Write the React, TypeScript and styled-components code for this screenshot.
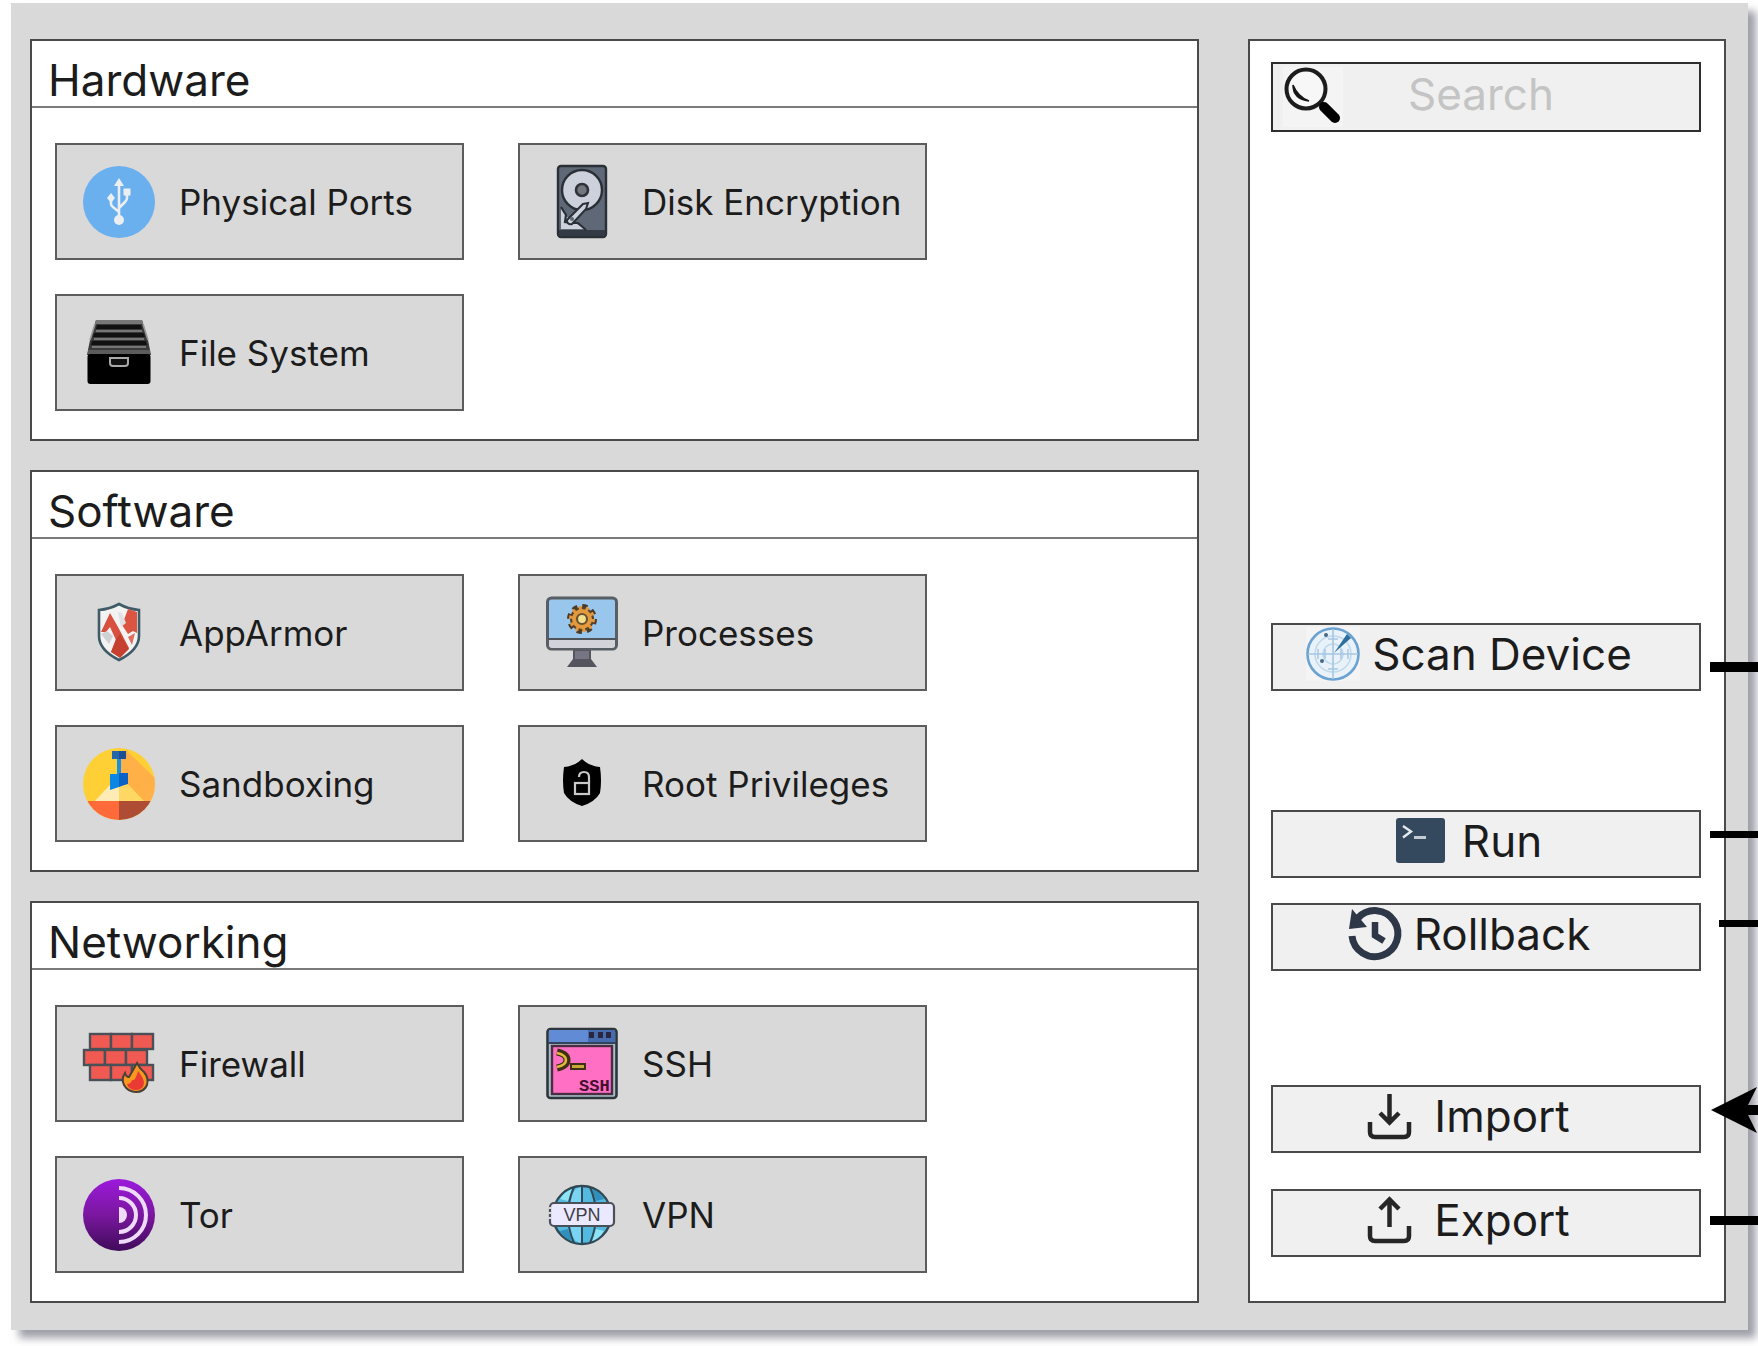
import React from "react";
import styled, { createGlobalStyle } from "styled-components";

const line = "#4a4a4a";
const ink = "#1c1c1c";

const GlobalStyle = createGlobalStyle`
  * { box-sizing: border-box; }
  body {
    margin: 0;
    background: #fff;
    color: ${ink};
    font-family: Inter, "Liberation Sans", sans-serif;
    font-optical-sizing: none;
    overflow-x: hidden;
  }
  button, input { font: inherit; color: inherit; }
  svg { display: block; flex: none; overflow: visible; }
`;

const Page = styled.div`
  padding: 3px 10px 16px 11px;
  overflow: hidden;
`;

const Frame = styled.div`
  display: grid;
  grid-template-columns: minmax(0, 1169fr) minmax(0, 478fr);
  gap: 49px;
  padding: 36px 22px 27px 19px;
  background: #d9d9d9;
  box-shadow: 8px 8px 8px rgba(95, 95, 112, 0.6);
`;

const Sections = styled.main`
  display: flex;
  flex-direction: column;
  gap: 29px;
`;

const Section = styled.section`
  border: 2px solid ${line};
  background: #fff;
`;

const SectionTitle = styled.h2`
  margin: 0;
  padding: 13px 16px 0;
  border-bottom: 2px solid #7a7a7a;
  font-size: 44px;
  font-weight: 400;
  line-height: 52px;
`;

const TileGrid = styled.div`
  display: grid;
  grid-template-columns: repeat(2, minmax(0, 409px));
  gap: 34px 54px;
  padding: 35px 23px 28px;
`;

const Tile = styled.button`
  display: flex;
  align-items: center;
  gap: 24px;
  height: 117px;
  padding: 0 0 0 26px;
  border: 2px solid #5c5c5c;
  background: #d9d9d9;
  font-size: 35px;
  line-height: 40px;
  text-align: left;
  white-space: nowrap;
`;

const Sidebar = styled.aside`
  display: flex;
  flex-direction: column;
  justify-content: space-between;
  padding: 21px 23px 44px 21px;
  border: 2px solid ${line};
  background: #fff;
`;

const SearchBox = styled.label`
  display: flex;
  align-items: center;
  height: 70px;
  padding-left: 10px;
  border: 2px solid #2e2e2e;
  background: #f0f0f0;
`;

const SearchInput = styled.input`
  flex: 1;
  min-width: 0;
  height: 66px;
  padding: 0 16px 6px 65px;
  border: 0;
  outline: 0;
  background: transparent;
  font-size: 44px;
  &::placeholder { color: #c4c4c4; opacity: 1; }
`;

const Actions = styled.div`
  display: flex;
  flex-direction: column;
`;

const ActionSlot = styled.div<{ $gap: number }>`
  position: relative;
  margin-top: ${(p) => p.$gap}px;
`;

const Action = styled.button`
  display: flex;
  align-items: center;
  justify-content: center;
  gap: 12px;
  width: 100%;
  height: 68px;
  padding: 0 34px 6px 0;
  border: 2px solid ${line};
  background: #f0f0f0;
  font-size: 44px;
  line-height: 56px;
  white-space: nowrap;
`;

const Wire = styled.span<{ $top: number; $size: number; $inset: number }>`
  position: absolute;
  top: ${(p) => p.$top}px;
  left: calc(100% + ${(p) => p.$inset}px);
  width: 60px;
  height: ${(p) => p.$size}px;
  background: #000;
`;

const ArrowWire = styled.svg`
  position: absolute;
  top: 2px;
  left: calc(100% + 10px);
`;

const TileIcon = ({ children }: { children: React.ReactNode }) => (
  <svg width="72" height="72" viewBox="0 0 72 72" aria-hidden="true">{children}</svg>
);

const ActionIcon = ({ children }: { children: React.ReactNode }) => (
  <svg width="54" height="54" viewBox="0 0 54 54" aria-hidden="true">{children}</svg>
);

const UsbIcon = () => (
  <TileIcon>
    <circle cx="36" cy="36" r="36" fill="#6aafee" />
    <g fill="#eceff2" stroke="none">
      <path d="M36 12l5 8H31z" />
      <circle cx="36" cy="54" r="5" />
      <path d="M28 27l4 5-4 5-4-5z" />
      <path d="M40.500 22.500h7v7h-7z" />
    </g>
    <path d="M36 18v34M28 35v3q0 2 2 3l6 5M44 28v4q0 2-2 4l-6 6" fill="none" stroke="#eceff2" strokeWidth="2.600" />
  </TileIcon>
);

const FileIcon = () => (
  <TileIcon>
    <path d="M13 3h46l3 10 3 10 3 15H4l3-15 3-10z" fill="#3a3a3a" />
    <path d="M13 3h46l1 4H12z" fill="#777" />
    <path d="M14 8h44l1 4H13z" fill="#111" />
    <path d="M11 16h50l1 4H10zM9 24h54l1 4H8z" fill="#111" />
    <path d="M13 14h46M11 22h50M9 30h54" stroke="#8b8b8b" strokeWidth="1.600" />
    <path d="M12 7l-5 16M60 7l5 16" stroke="#9a9a9a" strokeWidth="1.600" />
    <path d="M5 33h62v4H5z" fill="#5c5c5c" />
    <rect x="4.500" y="37" width="63" height="30" rx="3" fill="#000" />
    <path d="M27 41h18v5q0 3-3 3H30q-3 0-3-3z" fill="#111" stroke="#aaa" strokeWidth="2" />
  </TileIcon>
);

const DiskIcon = () => (
  <TileIcon>
    <rect x="12" y="0" width="48" height="71" rx="3" fill="#5f6877" stroke="#2b2f36" strokeWidth="2.400" />
    <path d="M13 64h46v4q0 2-2 2H15q-2 0-2-2z" fill="#343a44" />
    <circle cx="36" cy="24" r="20" fill="#cdd1dc" stroke="#2b2f36" strokeWidth="2.400" />
    <circle cx="36" cy="24" r="6" fill="#737780" stroke="#30343a" strokeWidth="2.600" />
    <path d="M15 41l5 9 6 5 13 8H15z" fill="#cdd1dc" />
    <path d="M15 41l5 8-1 7 8 1 5 0 8 7" fill="none" stroke="#2b2f36" strokeWidth="2.200" />
    <path d="M37 38l5-1-2 6-14 15q-5 1-5-4l10-10z" fill="#cdd1dc" stroke="#2b2f36" strokeWidth="2" />
    <circle cx="26" cy="53" r="2" fill="#5f6877" />
  </TileIcon>
);

const ArmorIcon = () => (
  <TileIcon>
    <path d="M36 7q9 5 20 6v26q0 14-20 24Q16 53 16 39V13q11-1 20-6z" fill="#f3f3f3" stroke="#405b68" strokeWidth="2.600" />
    <path d="M45 12l9 3v21l-4-2-5 3-6-9z" fill="#dc5543" />
    <path d="M18 35l9-19 8 14 11 21-9 9-9-5 5-12-6-13-4 5z" fill="#d8503f" />
    <path d="M33 42l4-5 9 15-9 9-9-6z" fill="#c6402f" />
    <path d="M18 37l6-3 6 5-4 8z" fill="#cfd1d3" />
    <path d="M52 36l-3 12-4-8z" fill="#e06e5f" />
    <path d="M35 15l4 1 4 10-5 4z" fill="#dfe1e2" />
  </TileIcon>
);

const SandIcon = () => (
  <TileIcon>
    <clipPath id="sandDisc"><circle cx="36" cy="36" r="36" /></clipPath>
    <g clipPath="url(#sandDisc)">
      <path d="M0 0h72v72H0z" fill="#ffcf36" />
      <path d="M43 2l29 28v24H60L37 34V10h6z" fill="#ffb147" />
      <path d="M11 54l25-27v27z" fill="#ffebb5" />
      <path d="M62 54L36 27v27z" fill="#ffd863" />
      <path d="M0 53h36v19H0z" fill="#ff6a3a" />
      <path d="M36 53h36v19H36z" fill="#ae4d33" />
      <path d="M29 3h7v8h-7z" fill="#2567a8" />
      <path d="M36 3h7v8h-7z" fill="#1c4f94" />
    </g>
    <path d="M34 11h4v16h-4z" fill="#1590e2" />
    <path d="M27 26h9v13l-9 3z" fill="#0b86e2" />
    <path d="M36 25h9v11q-4 1-9 3z" fill="#0a62c6" />
  </TileIcon>
);

const ProcessIcon = () => (
  <TileIcon>
    <path d="M27 53h18v9l6 8H21l6-8z" fill="#55555d" />
    <path d="M29 54h14v8H29z" fill="#777583" />
    <rect x="1.500" y="1" width="69" height="51" rx="4" fill="#98c6ec" stroke="#595e64" strokeWidth="3" />
    <path d="M3 43h66v5q0 3-3 3H6q-3 0-3-3z" fill="#d2d2da" />
    <path d="M2 42h68" stroke="#4f545a" strokeWidth="2.200" />
    <circle cx="36" cy="22" r="12.500" fill="none" stroke="#4b3a2a" strokeWidth="5" strokeDasharray="5 4.800" />
    <circle cx="36" cy="22" r="11" fill="#e39a3e" stroke="#5a4229" strokeWidth="2" />
    <circle cx="36" cy="22" r="11" fill="none" stroke="#e39a3e" strokeWidth="4" strokeDasharray="3 3.900" />
    <circle cx="36" cy="22" r="5" fill="#f2e08d" stroke="#6a5133" strokeWidth="2.200" />
  </TileIcon>
);

const RootIcon = () => (
  <TileIcon>
    <path d="M36 11q7 7 18 8 2 14 0 26-5 9-18 13-13-4-18-13-2-12 0-26 11-1 18-8z" fill="#000" />
    <rect x="29" y="35" width="14" height="11" fill="none" stroke="#c8c8c8" strokeWidth="2.200" />
    <path d="M33 29q0-5 5-5t5 5v6" fill="none" stroke="#c8c8c8" strokeWidth="2.200" />
  </TileIcon>
);

const bricks = [
  [7, 6], [28, 6], [49, 6],
  [1, 22], [22, 22], [43, 22],
  [7, 37], [28, 37], [49, 37],
];

const FirewallIcon = () => (
  <TileIcon>
    {bricks.map(([x, y]) => (
      <rect key={`${x}-${y}`} x={x} y={y} width="21" height="15" fill="#f05a52" stroke="#4a5057" strokeWidth="2.400" />
    ))}
    <path d="M54 35q3 6 7 9 5 6 3 13-3 7-11 7t-12-7q-3-6 1-12 1 4 4 4 4-7 8-14z" fill="#f9981f" stroke="#4a4038" strokeWidth="2" />
    <path d="M55 43q5 6 6 11 0 8-8 8-7 0-9-6 4 0 5-4 3 2 6-9z" fill="#ea3a34" />
  </TileIcon>
);

const TorIcon = () => (
  <TileIcon>
    <linearGradient id="torDisc" x1="0" y1="0" x2="0" y2="1">
      <stop offset="0" stopColor="#9c19dc" />
      <stop offset="0.5" stopColor="#7a179f" />
      <stop offset="1" stopColor="#400b5a" />
    </linearGradient>
    <circle cx="36" cy="36" r="36" fill="url(#torDisc)" />
    <path d="M36 28a8 8 0 0 1 0 16z" fill="#eedbfa" />
    <path d="M36 19a17 17 0 0 1 0 34M36 9a27 27 0 0 1 0 54" fill="none" stroke="#eedbfa" strokeWidth="4" />
  </TileIcon>
);

const SshIcon = () => (
  <TileIcon>
    <rect x="1.500" y="1" width="69" height="69" rx="3" fill="#a9c0ca" stroke="#2e363c" strokeWidth="2.600" />
    <path d="M3 2h66v13H3z" fill="#628bd6" />
    <path d="M42 2h27v13H42z" fill="#466cb0" />
    <path d="M2 15h68" stroke="#35425c" strokeWidth="2" />
    <path d="M43 7h5M52 7h5M60 7h5" stroke="#2c2540" strokeWidth="6" />
    <rect x="6" y="18" width="60" height="48" fill="#ff70c5" stroke="#4b2c40" strokeWidth="2.400" />
    <path d="M11 24q10 2 10 8t-10 8" fill="none" stroke="#3e3012" strokeWidth="7" />
    <path d="M11 25q9 2 9 7t-9 7" fill="none" stroke="#dcb93c" strokeWidth="2.600" />
    <rect x="25" y="36" width="14" height="5" fill="#c9a73b" stroke="#3e3012" strokeWidth="2" />
    <text x="33" y="63" fontFamily="Liberation Mono, monospace" fontWeight="700" fontSize="17" fill="#43102f">SSH</text>
  </TileIcon>
);

const VpnIcon = () => (
  <TileIcon>
    <circle cx="36" cy="36" r="29" fill="#53b9e0" stroke="#314955" strokeWidth="2.400" />
    <path d="M36 8v56q-13 0-13-28T36 8z" fill="#7ad3f2" />
    <path d="M14 20q5-8 12-10l-4 12zM58 52q-5 8-12 10l4-12z" fill="#8ee3f5" />
    <path d="M58 20q-5-8-12-10l4 12zM14 52q5 8 12 10l-4-12z" fill="#2f8fbd" />
    <path d="M36 7v58M28 8Q16 36 28 64M44 8q12 28 0 56" fill="none" stroke="#314955" strokeWidth="2" />
    <rect x="4" y="24" width="64" height="23" rx="4" fill="#ebe9ff" stroke="#4b5058" strokeWidth="2.200" />
    <path d="M4 28v15" stroke="#d9d9d9" strokeWidth="3" strokeDasharray="2 3" />
    <text x="36" y="42" textAnchor="middle" fontFamily="Liberation Sans, sans-serif" fontSize="18" fill="#3e3e46">VPN</text>
  </TileIcon>
);

const SearchIcon = () => (
  <svg width="60" height="60" viewBox="0 0 60 60" aria-hidden="true">
    <path d="M0 0h60v60H0z" fill="#f4f4f4" />
    <circle cx="23" cy="22" r="19.500" fill="#f7f7f7" stroke="#1c1c1c" strokeWidth="4" />
    <path d="M10 18q0 14 16 16-11-4-16-16z" fill="#161616" stroke="#161616" strokeWidth="1.500" />
    <path d="M37 36l4 3" stroke="#161616" strokeWidth="4" />
    <path d="M41 40l11 11" stroke="#000" strokeWidth="10" strokeLinecap="round" />
  </svg>
);

const RadarIcon = () => (
  <ActionIcon>
    <path d="M0 0h54v54H0z" fill="#f4f4f5" />
    <circle cx="27" cy="27" r="25.500" fill="#eaf2f9" stroke="#6aa2d2" strokeWidth="2.600" />
    <circle cx="27" cy="27" r="18" fill="none" stroke="#c0d8ec" strokeWidth="1.500" />
    <circle cx="27" cy="27" r="10" fill="none" stroke="#c0d8ec" strokeWidth="1.500" />
    <path d="M27 2v50M2 27h50" stroke="#a6c6e2" strokeWidth="1.600" />
    <path d="M12 22v10M19 22v10M35 22v10M42 22v10M22 12h10M22 42h10" stroke="#a6c6e2" strokeWidth="1.500" />
    <path d="M28 26L41 7l4 4z" fill="#2d6e9f" />
    <circle cx="20" cy="8" r="2" fill="#44698a" />
    <circle cx="16" cy="34" r="2" fill="#44698a" />
  </ActionIcon>
);

const TerminalIcon = () => (
  <ActionIcon>
    <rect x="0" y="4" width="49" height="45" rx="3" fill="#35495e" />
    <path d="M7 12l8 5.500-8 6" fill="none" stroke="#e4e9ec" strokeWidth="2.400" />
    <path d="M18 23.500h12" stroke="#c3ccd3" strokeWidth="3" />
  </ActionIcon>
);

const HistoryIcon = () => (
  <ActionIcon>
    <path d="M4 29a23 23 0 1 0 6-18" fill="none" stroke="#2d3748" strokeWidth="7" />
    <path d="M4 2l15 18-18 2z" fill="#2d3748" />
    <path d="M27 15v13.500l9 5.500" fill="none" stroke="#2d3748" strokeWidth="6.500" />
  </ActionIcon>
);

const TrayIcon = ({ up = false }: { up?: boolean }) => (
  <ActionIcon>
    <path d="M2 33v10q0 5 5 5h29q5 0 5-5V33" fill="none" stroke="#262626" strokeWidth="4.500" />
    <path
      d={up ? "M21.500 34V7M12 16l9.500-9.500L31 16" : "M21.500 5v27M12 24l9.500 9.500L31 24"}
      fill="none"
      stroke="#262626"
      strokeWidth="4.500"
    />
  </ActionIcon>
);

const sections = [
  {
    title: "Hardware",
    items: [
      { label: "Physical Ports", Icon: UsbIcon },
      { label: "Disk Encryption", Icon: DiskIcon },
      { label: "File System", Icon: FileIcon },
    ],
  },
  {
    title: "Software",
    items: [
      { label: "AppArmor", Icon: ArmorIcon },
      { label: "Processes", Icon: ProcessIcon },
      { label: "Sandboxing", Icon: SandIcon },
      { label: "Root Privileges", Icon: RootIcon },
    ],
  },
  {
    title: "Networking",
    items: [
      { label: "Firewall", Icon: FirewallIcon },
      { label: "SSH", Icon: SshIcon },
      { label: "Tor", Icon: TorIcon },
      { label: "VPN", Icon: VpnIcon },
    ],
  },
];

export default function App() {
  return (
    <>
      <GlobalStyle />
      <Page>
        <Frame>
          <Sections>
            {sections.map(({ title, items }) => (
              <Section key={title}>
                <SectionTitle>{title}</SectionTitle>
                <TileGrid>
                  {items.map(({ label, Icon }) => (
                    <Tile key={label} type="button">
                      <Icon />
                      {label}
                    </Tile>
                  ))}
                </TileGrid>
              </Section>
            ))}
          </Sections>
          <Sidebar>
            <SearchBox>
              <SearchIcon />
              <SearchInput type="text" placeholder="Search" aria-label="Search" />
            </SearchBox>
            <Actions>
              <ActionSlot $gap={0}>
                <Action type="button"><RadarIcon />Scan Device</Action>
                <Wire $top={39} $size={10} $inset={9} />
              </ActionSlot>
              <ActionSlot $gap={119}>
                <Action type="button"><TerminalIcon />Run</Action>
                <Wire $top={21} $size={7} $inset={9} />
              </ActionSlot>
              <ActionSlot $gap={25}>
                <Action type="button"><HistoryIcon />Rollback</Action>
                <Wire $top={17} $size={7} $inset={18} />
              </ActionSlot>
              <ActionSlot $gap={114}>
                <Action type="button"><TrayIcon />Import</Action>
                <ArrowWire width="60" height="46" viewBox="0 0 60 46" aria-hidden="true">
                  <path d="M0 23L46 0l-9 18h23v10H37l9 18z" fill="#000" />
                </ArrowWire>
              </ActionSlot>
              <ActionSlot $gap={36}>
                <Action type="button"><TrayIcon up />Export</Action>
                <Wire $top={27} $size={9} $inset={9} />
              </ActionSlot>
            </Actions>
          </Sidebar>
        </Frame>
      </Page>
    </>
  );
}
